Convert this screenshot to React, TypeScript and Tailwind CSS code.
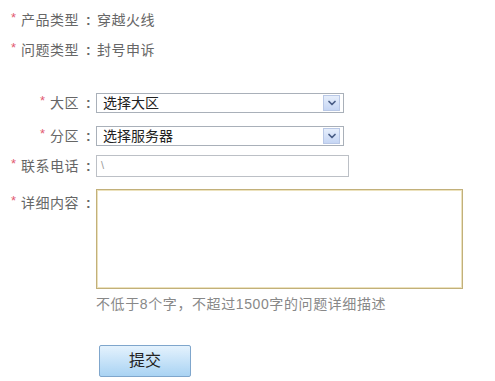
import { ChevronDown } from "lucide-react";

const font = { fontFamily: '"Liberation Sans", "Noto Sans CJK SC", sans-serif' };

function Label({ text }: { text: string }) {
  return (
    <div className="w-[92px] shrink-0 flex justify-end items-center text-[14px] leading-[20px] text-[#666]">
      <span className="text-[#e25a72] text-[13px] mr-[5px] relative -top-[2px]">*</span>
      <span className="tracking-[0.5px]">{text}</span>
      <span className="w-[13px] pl-[7px] font-bold">:</span>
    </div>
  );
}

function SelectBox({ value }: { value: string }) {
  return (
    <div className="ml-1 w-[248px] h-[20px] border border-[#a9b0b9] bg-white flex items-center justify-between pl-[6px] pr-[3px]">
      <span className="text-[14px] leading-[18px] text-[#222]">{value}</span>
      <span className="w-[17px] h-[16px] border border-[#b9c8e6] bg-gradient-to-b from-[#e6eefb] to-[#c6d6f4] flex items-center justify-center">
        <ChevronDown size={12} strokeWidth={3.5} className="text-[#4a5e86]" />
      </span>
    </div>
  );
}

export default function App() {
  return (
    <div className="w-[495px] h-[381px] bg-white pt-[10px]" style={font}>
      <div className="flex items-center h-[20px]">
        <Label text="产品类型" />
        <span className="ml-[5px] text-[14px] tracking-[0.5px] text-[#666]">穿越火线</span>
      </div>
      <div className="flex items-center h-[20px] mt-[10px]">
        <Label text="问题类型" />
        <span className="ml-[5px] text-[14px] tracking-[0.5px] text-[#666]">封号申诉</span>
      </div>

      <div className="flex items-center h-[20px] mt-[33px]">
        <Label text="大区" />
        <SelectBox value="选择大区" />
      </div>
      <div className="flex items-center h-[20px] mt-[13px]">
        <Label text="分区" />
        <SelectBox value="选择服务器" />
      </div>

      <div className="flex items-center h-[22px] mt-[9px]">
        <Label text="联系电话" />
        <div className="ml-1 w-[253px] h-[22px] border border-[#bcc0c6] bg-white pl-[4px] text-[11px] leading-[18px] text-[#999]">
          \
        </div>
      </div>

      <div className="flex items-start mt-[12px]">
        <div className="mt-[4px]">
          <Label text="详细内容" />
        </div>
        <textarea className="ml-1 w-[367px] h-[100px] border border-[#c2b07a] shadow-[inset_0_0_0_1px_#ece2bd] bg-white resize-none outline-none" />
      </div>

      <p className="ml-[96px] mt-[5px] text-[14px] leading-[20px] tracking-[0.6px] text-[#888]">
        不低于8个字，不超过1500字的问题详细描述
      </p>

      <button className="ml-[99px] mt-[31px] w-[92px] h-[32px] rounded-[2px] border border-[#7fa6cc] bg-gradient-to-b from-[#e4f2fd] to-[#a9d3f3] text-[16px] text-[#222]">
        提交
      </button>
    </div>
  );
}
